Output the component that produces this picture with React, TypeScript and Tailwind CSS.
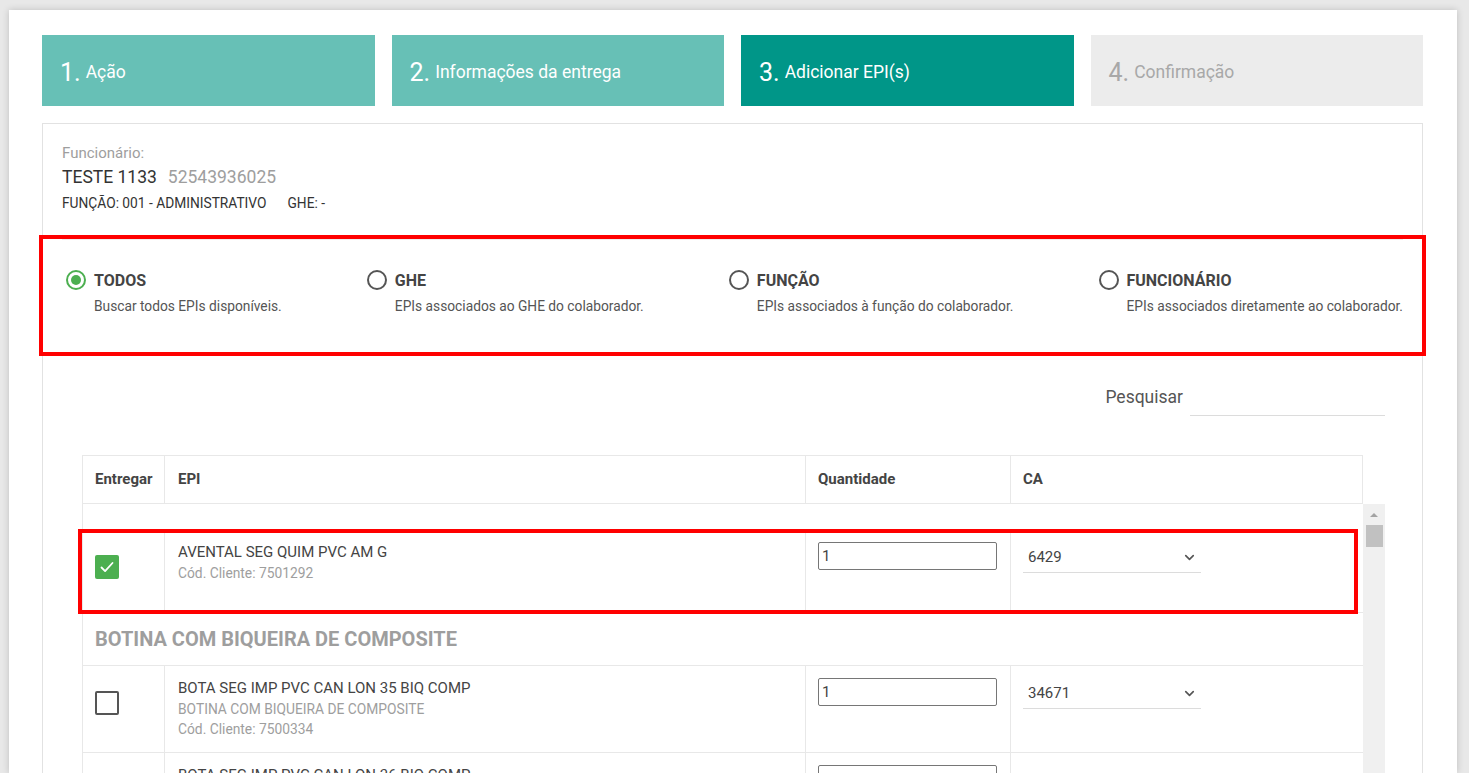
import { ChevronDown } from 'lucide-react'

type Step = { n: string; label: string; state: 'done' | 'active' | 'todo' }

const steps: Step[] = [
  { n: '1.', label: 'Ação', state: 'done' },
  { n: '2.', label: 'Informações da entrega', state: 'done' },
  { n: '3.', label: 'Adicionar EPI(s)', state: 'active' },
  { n: '4.', label: 'Confirmação', state: 'todo' },
]

const filters = [
  { title: 'TODOS', desc: 'Buscar todos EPIs disponíveis.', checked: true },
  { title: 'GHE', desc: 'EPIs associados ao GHE do colaborador.', checked: false },
  { title: 'FUNÇÃO', desc: 'EPIs associados à função do colaborador.', checked: false },
  { title: 'FUNCIONÁRIO', desc: 'EPIs associados diretamente ao colaborador.', checked: false },
]

function Checkbox({ checked }: { checked: boolean }) {
  if (checked)
    return (
      <div className="flex h-[24px] w-[24px] items-center justify-center rounded-[2px] bg-[#4caf50]">
        <svg width="18" height="18" viewBox="0 0 18 18" fill="none">
          <path d="M3.5 9.5l3.6 3.6L14.5 5" stroke="#fff" strokeWidth="1.8" strokeLinecap="round" strokeLinejoin="round" />
        </svg>
      </div>
    )
  return <div className="h-[24px] w-[24px] rounded-[2px] border-2 border-[#555]" />
}

function ItemRow({ name, group, code, ca, h, checked = false }: { name: string; group?: string; code: string; ca: string; checked?: boolean; h: string }) {
  return (
    <div className={`grid grid-cols-[82px_641px_205px_1fr] border-b border-[#e8e8e8] ${h}`}>
      <div className="border-r border-[#e8e8e8] pl-[12px] pt-[25px]">
        <Checkbox checked={checked} />
      </div>
      <div className="border-r border-[#e8e8e8] pl-[13px] pt-[12px] leading-[20.5px]">
        <div className="text-[15px] text-[#444]">{name}</div>
        {group && <div className="text-[13.8px] text-[#9e9e9e]">{group}</div>}
        <div className="text-[13.8px] text-[#9e9e9e]">{code}</div>
      </div>
      <div className="border-r border-[#e8e8e8] pl-[12px] pt-[12px]">
        <div className="flex h-[28px] w-[179px] items-center rounded-[2px] border border-[#767676] pl-[3px] text-[15px] text-[#444]">1</div>
      </div>
      <div className="pl-[12px] pt-[12px]">
        <div className="flex h-[31px] w-[178px] items-center justify-between border-b border-[#dcdcdc] pl-[5px] pr-[4px] text-[15px] text-[#444]">
          <span>{ca}</span>
          <ChevronDown size={15} strokeWidth={2.6} color="#555" />
        </div>
      </div>
    </div>
  )
}

export default function App() {
  return (
    <div className="h-screen overflow-hidden bg-[#e8e8e8] pl-[9px] pr-[12px] pt-[10px] font-['Roboto',sans-serif]">
      <div className="h-full bg-white px-[33px] pr-[34px] pt-[25px] shadow-[0_0_7px_rgba(0,0,0,0.18)]">
        {/* steps */}
        <div className="grid h-[71px] grid-cols-4 gap-[17px]">
          {steps.map((s) => (
            <div
              key={s.n}
              className={`flex items-center pl-[18px] pt-[4px] ${
                s.state === 'done' ? 'bg-[#67c0b6] text-white' : s.state === 'active' ? 'bg-[#009688] text-white' : 'bg-[#ececec] text-[#a8a8a8]'
              }`}
            >
              <span className="text-[25px] leading-none">{s.n}</span>
              <span className="ml-[5px] text-[17.5px] leading-none">{s.label}</span>
            </div>
          ))}
        </div>

        {/* panel */}
        <div className="mt-[17px] h-[700px] border border-[#e2e2e2] px-[19px] pt-[19px]">
          <div className="text-[15px] leading-[20px] text-[#9e9e9e]">Funcionário:</div>
          <div className="mt-[2px] flex items-baseline gap-[11px] text-[17.5px] leading-[24px]">
            <span className="text-[#333]">TESTE 1133</span>
            <span className="text-[#9e9e9e]">52543936025</span>
          </div>
          <div className="mt-[5px] flex gap-[21px] text-[13.75px] leading-[18px] text-[#333]">
            <span>FUNÇÃO: 001 - ADMINISTRATIVO</span>
            <span>GHE: -</span>
          </div>

          <div className="relative mt-[27px] border-t border-[#eeeeee] pl-[4px] pt-[31px]">
            <div className="flex justify-between">
              {filters.map((f) => (
                <div key={f.title} className="flex items-start">
                  {f.checked ? (
                    <div className="mt-[-1px] flex h-[20px] w-[20px] items-center justify-center rounded-full border-2 border-[#4caf50]">
                      <div className="h-[10px] w-[10px] rounded-full bg-[#4caf50]" />
                    </div>
                  ) : (
                    <div className="mt-[-1px] h-[20px] w-[20px] rounded-full border-2 border-[#555]" />
                  )}
                  <div className="ml-[8px]">
                    <div className="text-[16px] font-bold leading-[20px] text-[#444]">{f.title}</div>
                    <div className="mt-[6px] text-[13.75px] leading-[18px] text-[#555]">{f.desc}</div>
                  </div>
                </div>
              ))}
            </div>
            {/* annotation box */}
            <div className="pointer-events-none absolute -left-[23px] -right-[23px] -top-[5px] h-[121px] border-4 border-[#ff0000]" />
          </div>

          <div className="ml-[20px] mr-[18px]">
            <div className="mt-[64px] flex h-[37px] items-center justify-end">
              <span className="mr-[7px] text-[17.5px] text-[#555]">Pesquisar</span>
              <div className="h-full w-[195px] border-b border-[#dcdcdc]" />
            </div>

            {/* table header */}
            <div className="mr-[22px] mt-[39px] grid h-[49px] grid-cols-[82px_641px_205px_1fr] border border-[#e8e8e8] text-[15px] font-bold text-[#444]">
              <div className="flex items-center border-r border-[#e8e8e8] pl-[12px]">Entregar</div>
              <div className="flex items-center border-r border-[#e8e8e8] pl-[13px]">EPI</div>
              <div className="flex items-center border-r border-[#e8e8e8] pl-[12px]">Quantidade</div>
              <div className="flex items-center pl-[12px]">CA</div>
            </div>

            {/* table body */}
            <div className="flex">
              <div className="relative flex-1 border-l border-[#e8e8e8] pt-[26px]">
                <ItemRow h="h-[83px]" checked name="AVENTAL SEG QUIM PVC AM G" code="Cód. Cliente: 7501292" ca="6429" />
                <div className="flex h-[53px] items-center border-b border-[#e8e8e8] pl-[12px] text-[20px] font-bold text-[#9e9e9e]">
                  BOTINA COM BIQUEIRA DE COMPOSITE
                </div>
                <ItemRow h="h-[87px]" name="BOTA SEG IMP PVC CAN LON 35 BIQ COMP" group="BOTINA COM BIQUEIRA DE COMPOSITE" code="Cód. Cliente: 7500334" ca="34671" />
                <ItemRow h="h-[87px]" name="BOTA SEG IMP PVC CAN LON 36 BIQ COMP" group="BOTINA COM BIQUEIRA DE COMPOSITE" code="Cód. Cliente: 7500335" ca="34671" />
                {/* annotation box */}
                <div className="pointer-events-none absolute -left-[5px] right-[5px] top-[25px] h-[85px] border-4 border-[#ff0000]" />
              </div>
              <div className="w-[22px] bg-[#f0f0f0]">
                <div className="mx-auto mt-[9px] h-0 w-0 border-x-[4px] border-b-[4px] border-x-transparent border-b-[#a3a3a3]" />
                <div className="ml-[3px] mt-[8px] h-[22px] w-[17px] bg-[#c1c1c1]" />
              </div>
            </div>
          </div>
        </div>
      </div>
    </div>
  )
}
